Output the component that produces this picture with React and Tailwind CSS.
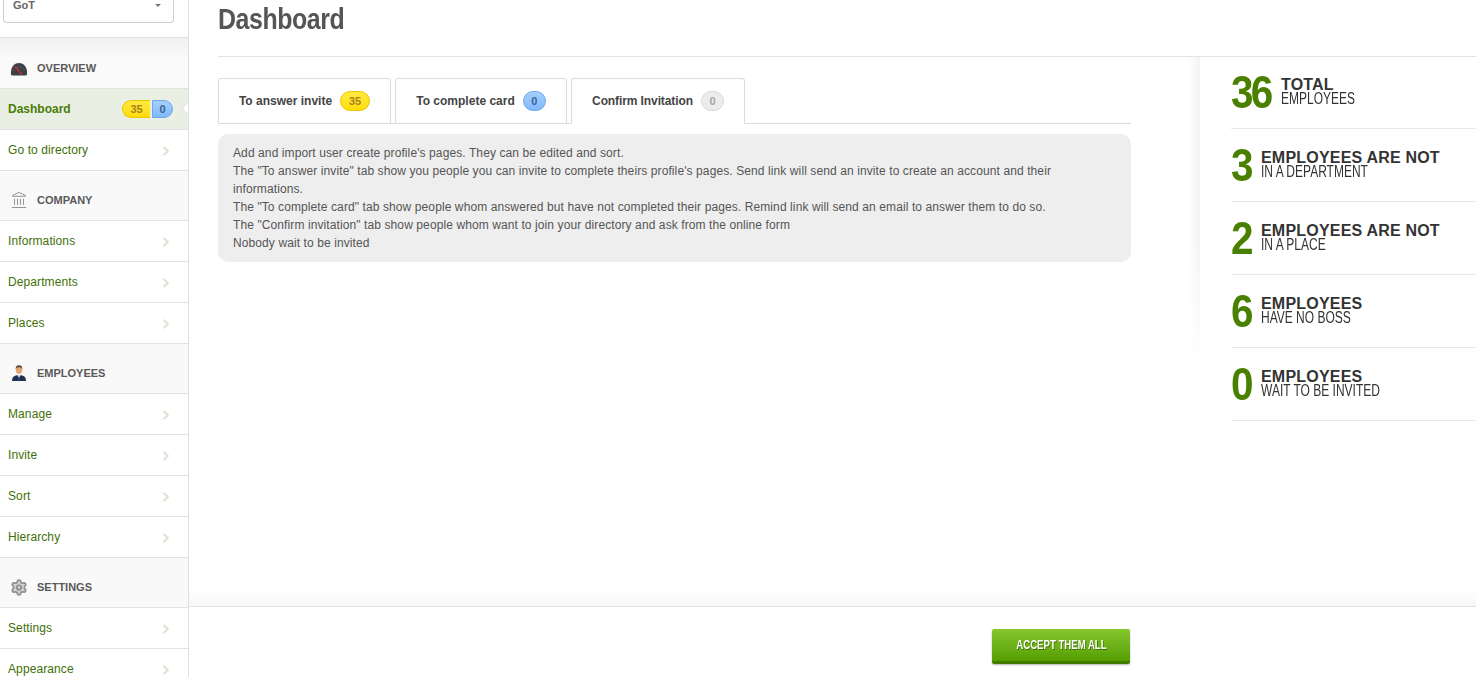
import { ChevronRight, Landmark, Settings } from "lucide-react";

const Gauge = () => (
  <svg width="18" height="14" viewBox="0 0 18 14">
    <path d="M1 12.500C.3 5.500 4 1 9 1s8.700 4.500 8 11.500c-.2.800-1 1-2 1H3c-1 0-1.800-.2-2-1z" fill="#3d4046" />
    <path d="M3 9a6.500 6.500 0 0 1 12 0" fill="none" stroke="#777b82" strokeWidth="1" strokeDasharray="1 2" />
    <path d="M5 4.500l7 8" stroke="#d8272d" strokeWidth="1.200" />
  </svg>
);

const Person = () => (
  <svg width="16" height="16" viewBox="0 0 16 16">
    <path d="M1 16c0-3.500 1.500-5 4.500-5.700h5c3 .7 4.500 2.200 4.500 5.700z" fill="#1f3050" />
    <path d="M6.300 10.300L8 13l1.700-2.700z" fill="#fff" />
    <path d="M7.500 11.500h1l.4 3-.9 1-.9-1z" fill="#2b4a86" />
    <ellipse cx="8" cy="5" rx="3.200" ry="4" fill="#e0a878" />
    <path d="M4.700 4.500C4.400 1.500 6 .3 8 .3s3.600 1.200 3.300 4.200c-.5-1.600-1.300-2.200-3.300-2.200s-2.800.6-3.300 2.200z" fill="#5a3a22" />
  </svg>
);

const menu = [
  {
    title: "OVERVIEW",
    icon: <Gauge />,
    items: [{ label: "Dashboard", active: true }, { label: "Go to directory" }],
  },
  {
    title: "COMPANY",
    icon: <Landmark size={18} strokeWidth={1.25} color="#8b8b8b" />,
    items: [{ label: "Informations" }, { label: "Departments" }, { label: "Places" }],
  },
  {
    title: "EMPLOYEES",
    icon: <Person />,
    items: [{ label: "Manage" }, { label: "Invite" }, { label: "Sort" }, { label: "Hierarchy" }],
  },
  {
    title: "SETTINGS",
    icon: <Settings size={19} strokeWidth={2.25} color="#8e8e8e" fill="#d2d2d2" />,
    items: [{ label: "Settings" }, { label: "Appearance" }],
  },
];

const stats = [
  { n: "36", top: "TOTAL", bottom: "EMPLOYEES", wide: true },
  { n: "3", top: "EMPLOYEES ARE NOT", bottom: "IN A DEPARTMENT" },
  { n: "2", top: "EMPLOYEES ARE NOT", bottom: "IN A PLACE" },
  { n: "6", top: "EMPLOYEES", bottom: "HAVE NO BOSS" },
  { n: "0", top: "EMPLOYEES", bottom: "WAIT TO BE INVITED" },
];

const tabs = [
  { label: "To answer invite", count: "35", badge: "w-[30px] border-[#ecc700] bg-gradient-to-b from-[#ffea3c] to-[#ffdd00] text-[#a9801a]", box: "w-[173px]" },
  { label: "To complete card", count: "0", badge: "w-[23px] border-[#6fa8e8] bg-gradient-to-b from-[#a5cfff] to-[#7fb9ff] text-[#3d648f]", box: "w-[172px]" },
  { label: "Confirm Invitation", count: "0", badge: "w-[23px] border-[#d8d8d8] bg-[#ececec] text-[#a5a5a5]", box: "w-[174px] tracking-[-0.1px]", active: true },
];

function MenuRow({ item }) {
  if (item.active) {
    return (
      <div className="relative flex h-[41px] items-center border-b border-[#e2e2e2] bg-[#eaefe4] pl-2 pr-[15px]">
        <span className="flex-1 font-bold text-[#4b7d07]">{item.label}</span>
        <span className="flex h-[18px] w-[28px] items-center justify-center rounded-l-full border border-r-0 border-[#ecc700] bg-gradient-to-b from-[#ffea3c] to-[#ffdd00] text-[11px] font-bold text-[#a9801a]">35</span>
        <span className="ml-[2px] flex h-[18px] w-[21px] items-center justify-center rounded-r-full border border-[#6fa8e8] bg-gradient-to-b from-[#a5cfff] to-[#7fb9ff] text-[11px] font-bold text-[#3d648f]">0</span>
        <span className="absolute right-[-4px] top-[15px] h-[9px] w-[9px] rotate-45 border-b border-l border-[#dcdcdc] bg-white" />
      </div>
    );
  }
  return (
    <div className="flex h-[41px] items-center justify-between border-b border-[#e2e2e2] bg-white pl-2 pr-[15px]">
      <span className="tracking-[0.1px] text-[#3f7006]">{item.label}</span>
      <ChevronRight size={14} strokeWidth={4} color="#dde6d2" className="mt-[2px]" />
    </div>
  );
}

function Sidebar() {
  return (
    <aside className="h-[677px] w-[189px] shrink-0 overflow-hidden border-r border-[#dedede] text-[12px]">
      <div className="h-[38px] border-b border-[#e2e2e2] bg-white pr-[14px] pl-[3px]">
        <div className="flex h-[23px] items-start justify-between rounded-b-[4px] border border-t-0 border-[#cfcfcf] pl-[9px] pr-[12px]">
          <span className="text-[11px] leading-[11px] font-bold text-[#666]">GoT</span>
          <span className="mt-[4px] border-x-[3px] border-t-[3px] border-x-transparent border-t-[#777]" />
        </div>
      </div>
      {menu.map((section, i) => (
        <div key={section.title}>
          <div className={`flex items-center gap-[9px] border-b border-[#e2e2e2] pl-[10px] ${i === 0 ? "h-[51px] bg-gradient-to-b from-[#f1f1f1] to-[#fafafa] to-40% pt-[11px]" : "h-[50px] bg-[#f9f9f9] pt-[9px]"}`}>
            <span className="flex w-[18px] items-center justify-center">{section.icon}</span>
            <span className="text-[11px] font-bold text-[#595959]">{section.title}</span>
          </div>
          {section.items.map((item) => (
            <MenuRow key={item.label} item={item} />
          ))}
        </div>
      ))}
    </aside>
  );
}

function Tab({ tab }) {
  return (
    <div className={`flex h-[46px] items-center justify-center gap-[8px] rounded-t-[3px] border border-[#dcdcdc] bg-white text-[12px] font-bold text-[#444] ${tab.box} ${tab.active ? "border-b-white" : ""}`}>
      <span>{tab.label}</span>
      <span className={`flex h-[20px] items-center justify-center rounded-full border text-[11px] font-bold ${tab.badge}`}>{tab.count}</span>
    </div>
  );
}

function Stat({ stat }) {
  return (
    <div className="flex h-[73px] items-center border-b border-[#e8e8e8]">
      <span className={`mb-[1px] origin-left scale-x-[0.88] text-[46px] leading-none font-bold tracking-[-3px] text-[#4a8000] ${stat.wide ? "w-[50px]" : "w-[30px]"}`}>{stat.n}</span>
      <div className="mb-[2px] flex flex-col text-[#333]">
        <span className="text-[16px] leading-[15px] font-bold tracking-[0.2px] whitespace-nowrap">{stat.top}</span>
        <span className="origin-left scale-x-[0.75] text-[16px] leading-[13px] whitespace-nowrap">{stat.bottom}</span>
      </div>
    </div>
  );
}

export default function App() {
  return (
    <div className="flex h-[677px] w-[1476px] overflow-hidden bg-white font-['Liberation_Sans',Arial,sans-serif]">
      <Sidebar />
      <main className="flex min-w-0 flex-1 flex-col">
        <div className="ml-[29px] h-[57px] border-b border-[#e2e2e2]">
          <h1 className="origin-left scale-x-[0.83] pt-[1px] text-[30px] leading-[36px] font-bold tracking-[-0.5px] text-[#555]">Dashboard</h1>
        </div>
        <div className="flex flex-1">
          <div className="w-[1011px] pt-[21px] pl-[29px]">
            <div className="w-[913px] border-b border-[#dcdcdc]">
              <div className="-mb-px flex gap-1">
                {tabs.map((tab) => (
                  <Tab key={tab.label} tab={tab} />
                ))}
              </div>
            </div>
            <div className="mt-[10px] h-[128px] w-[913px] rounded-[10px] bg-[#eeeeee] py-[10px] pr-[40px] pl-[15px] text-[12px] leading-[18px] tracking-[0.1px] text-[#555]">
              <p>Add and import user create profile's pages. They can be edited and sort.</p>
              <p>The "To answer invite" tab show you people you can invite to complete theirs profile's pages. Send link will send an invite to create an account and their informations.</p>
              <p>The "To complete card" tab show people whom answered but have not completed their pages. Remind link will send an email to answer them to do so.</p>
              <p>The "Confirm invitation" tab show people whom want to join your directory and ask from the online form</p>
              <p>Nobody wait to be invited</p>
            </div>
          </div>
          <div className="relative -mt-px flex-1 pl-[31px]">
            <div className="absolute top-px left-[-12px] h-[310px] w-[12px] bg-gradient-to-r from-white to-[#f3f3f3] [mask-image:linear-gradient(to_bottom,black_60%,transparent)]" />
            {stats.map((stat) => (
              <Stat key={stat.n} stat={stat} />
            ))}
          </div>
        </div>
        <div className="h-[16px] bg-gradient-to-b from-white to-[#f7f7f7]" />
        <div className="flex h-[71px] justify-end border-t border-[#e2e2e2] pt-[22px] pr-[346px]">
          <button className="h-[35px] w-[138px] rounded-[2px] border-b-[3px] border-[#437a00] bg-gradient-to-b from-[#86c72c] to-[#559e00] text-center text-[12px] font-bold text-white shadow-[0_1px_2px_rgba(0,0,0,0.3)] [text-shadow:1px_1px_0_#3d6e00]">
            <span className="inline-block scale-x-[0.8] whitespace-nowrap">ACCEPT THEM ALL</span>
          </button>
        </div>
      </main>
    </div>
  );
}
